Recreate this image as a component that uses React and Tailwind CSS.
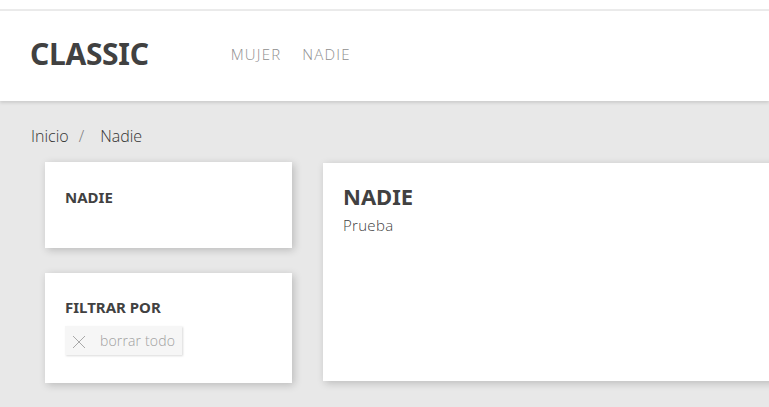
export default function App() {
  const light = { fontFamily: '"Open Sans", "Noto Sans", sans-serif' };
  return (
    <div className="w-full h-[407px] overflow-hidden bg-[#e8e8e8]" style={{ fontFamily: '"Noto Sans", sans-serif' }}>
      <div className="h-[9px] bg-white" />
      <div className="h-[2px] bg-[#ebebeb]" />
      <header className="relative h-[90px] bg-white flex items-center px-[30px] shadow-[0_2px_3px_0_rgba(0,0,0,0.12)]">
        <div className="text-[30px] font-bold text-[#414141] leading-none tracking-[-0.3px] -mt-[4px]">CLASSIC</div>
        <nav className="flex gap-[21px] ml-[82px] text-[15px] text-[#8f8f8f] uppercase font-light tracking-[1.2px] -mt-[3px]" style={light}>
          <span>Mujer</span>
          <span>Nadie</span>
        </nav>
      </header>
      <div className="px-[31px] pt-[24px] text-[16px] text-[#333] font-light leading-[22px]" style={light}>
        <span>Inicio</span>
        <span className="text-[#7a7a7a] mx-[10px]">/</span>
        <span className="ml-[6px]">Nadie</span>
      </div>
      <div className="flex pl-[45px] pt-[15px] gap-[31px] w-[1100px]">
        <div className="w-[247px] flex flex-col gap-[25px]">
          <div className="h-[86px] bg-white shadow-[2px_2px_8px_0_rgba(0,0,0,0.2)] px-[20px] pt-[28px]">
            <div className="text-[15px] font-bold text-[#414141] leading-none">NADIE</div>
          </div>
          <div className="h-[110px] bg-white shadow-[2px_2px_8px_0_rgba(0,0,0,0.2)] px-[20px] pt-[27px]">
            <div className="text-[15px] font-bold text-[#414141] leading-none">FILTRAR POR</div>
            <div className="mt-[11px] inline-flex items-center h-[29px] bg-[#f6f6f6] shadow-[1px_1px_2px_0_rgba(0,0,0,0.15)] pl-[7px] pr-[7px]">
              <svg width="14" height="14" viewBox="0 0 14 14" className="mt-[3px]">
                <path d="M1 1 L13 13 M13 1 L1 13" stroke="#a9a9a9" strokeWidth="1" fill="none" />
              </svg>
              <span className="ml-[14px] text-[14px] text-[#a0a0a0] font-light tracking-[0.15px]" style={light}>borrar todo</span>
            </div>
          </div>
        </div>
        <div className="flex-1 h-[218px] bg-white shadow-[2px_2px_8px_0_rgba(0,0,0,0.2)] px-[20px] pt-[20px] mt-[1px]">
          <div className="text-[22px] font-bold text-[#414141] leading-[26px]">NADIE</div>
          <div className="text-[15px] text-[#414141] font-light tracking-[0.3px] mt-[5px]" style={light}>Prueba</div>
        </div>
      </div>
    </div>
  );
}
